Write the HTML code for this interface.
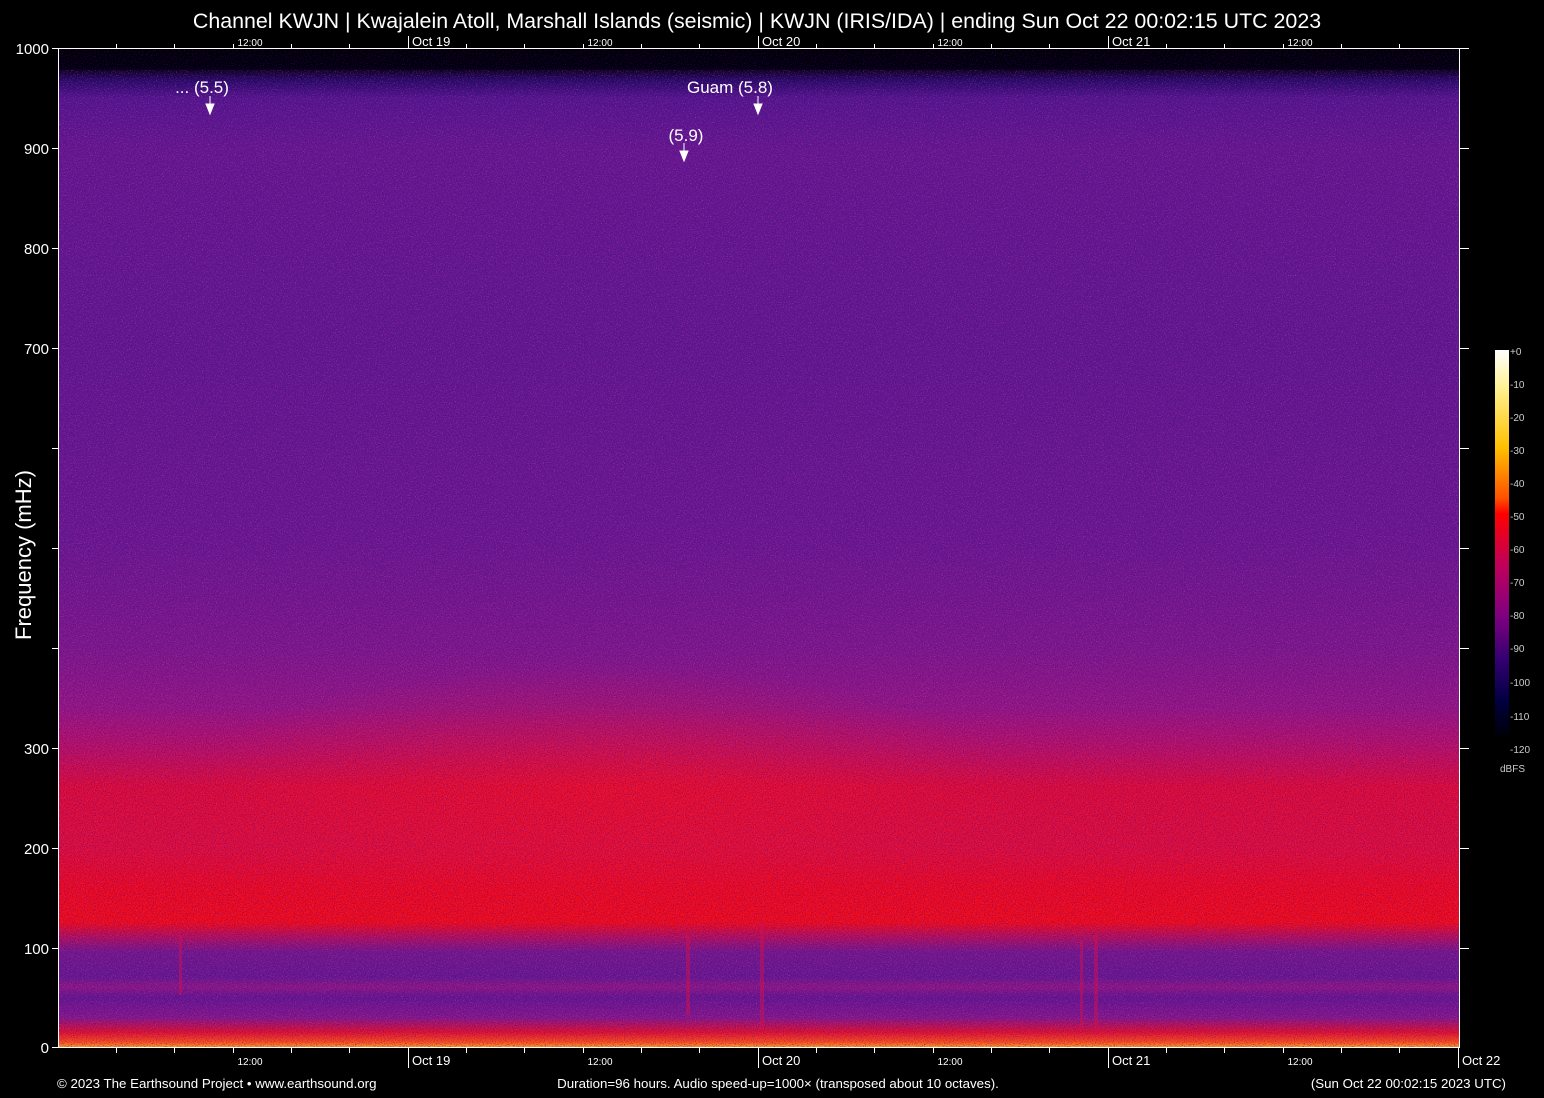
<!DOCTYPE html>
<html><head><meta charset="utf-8"><style>
html,body{margin:0;padding:0;background:#000;}
svg{display:block;font-family:"Liberation Sans",Arial,sans-serif;}
</style></head><body>
<svg width="1544" height="1098" viewBox="0 0 1544 1098" xmlns="http://www.w3.org/2000/svg">
<defs>
<linearGradient id="v" x1="0" y1="48" x2="0" y2="1047" gradientUnits="userSpaceOnUse">
<stop offset="0" stop-color="#000"/>
<stop offset="0.02" stop-color="#000008"/>
<stop offset="0.032" stop-color="#200a60"/>
<stop offset="0.05" stop-color="#50168a"/>
<stop offset="0.1" stop-color="#62188c"/>
<stop offset="0.3" stop-color="#5e188c"/>
<stop offset="0.5" stop-color="#68188c"/>
<stop offset="0.6" stop-color="#7a1888"/>
<stop offset="0.66" stop-color="#921680"/>
<stop offset="0.7" stop-color="#b81060"/>
<stop offset="0.74" stop-color="#e00a30"/>
<stop offset="0.8" stop-color="#e00c34"/>
<stop offset="0.84" stop-color="#f00818"/>
<stop offset="0.875" stop-color="#f40a10"/>
<stop offset="0.89" stop-color="#b01058"/>
<stop offset="0.905" stop-color="#701888"/>
<stop offset="0.93" stop-color="#64188c"/>
<stop offset="0.94" stop-color="#8a1880"/>
<stop offset="0.95" stop-color="#62168c"/>
<stop offset="0.97" stop-color="#801888"/>
<stop offset="0.985" stop-color="#e01028"/>
<stop offset="0.995" stop-color="#ff5010"/>
<stop offset="1" stop-color="#ffa020"/>
</linearGradient>
<radialGradient id="r" cx="600" cy="790" r="420" gradientUnits="userSpaceOnUse" gradientTransform="translate(600 790) scale(1 0.3) translate(-600 -790)">
<stop offset="0" stop-color="#ff1010" stop-opacity="0.45"/>
<stop offset="1" stop-color="#ff1010" stop-opacity="0"/>
</radialGradient>
<linearGradient id="cb" x1="0" y1="350" x2="0" y2="740" gradientUnits="userSpaceOnUse">
<stop offset="0" stop-color="#ffffff"/>
<stop offset="0.1" stop-color="#fff090"/>
<stop offset="0.25" stop-color="#ffc000"/>
<stop offset="0.38" stop-color="#ff5000"/>
<stop offset="0.42" stop-color="#ff0000"/>
<stop offset="0.55" stop-color="#c0005a"/>
<stop offset="0.68" stop-color="#800080"/>
<stop offset="0.8" stop-color="#300070"/>
<stop offset="0.9" stop-color="#000040"/>
<stop offset="1" stop-color="#000000"/>
</linearGradient>
<filter id="n" x="0" y="0" width="100%" height="100%">
<feTurbulence type="fractalNoise" baseFrequency="0.9" numOctaves="1" seed="3"/>
<feColorMatrix type="matrix" values="0 0 0 0 0.05  0 0 0 0 0  0 0 0 0 0.3  1.6 0 0 0 -0.75"/>
</filter>
<filter id="m" x="0" y="0" width="100%" height="100%">
<feTurbulence type="fractalNoise" baseFrequency="0.85" numOctaves="1" seed="7"/>
<feColorMatrix type="matrix" values="0 0 0 0 0.75  0 0 0 0 0.05  0 0 0 0 0.45  1.6 0 0 0 -0.8"/>
</filter>
</defs>
<rect width="1544" height="1098" fill="#000"/>
<rect x="58" y="48" width="1401" height="999" fill="url(#v)"/>
<rect x="58" y="600" width="1401" height="360" fill="url(#r)"/>
<rect x="58" y="70" width="1401" height="977" filter="url(#m)"/>
<rect x="58" y="48" width="1401" height="999" filter="url(#n)"/>
<g fill="#d01050" opacity="0.5">
<rect x="179" y="935" width="3" height="60"/>
<rect x="686" y="935" width="4" height="80"/>
<rect x="760" y="920" width="4" height="110"/>
<rect x="1080" y="940" width="3" height="90"/>
<rect x="1094" y="935" width="4" height="100"/>
</g>
<g stroke="#fff" stroke-width="1" fill="none">
<path d="M58.5 48V1047.5H1459.5V48M58 48.5H1459"/>
<path d="M52 48.5h6M52 148.5h6M52 248.5h6M52 348.5h6M52 448.5h6M52 548.5h6M52 648.5h6M52 748.5h6M52 848.5h6M52 948.5h6M52 1047.5h6"/>
<path d="M1459 48.5h10M1459 148.5h10M1459 248.5h10M1459 348.5h10M1459 448.5h10M1459 548.5h10M1459 648.5h10M1459 748.5h10M1459 848.5h10M1459 948.5h10"/>
<path d="M116.5 44v4M174.5 44v4M233.5 44v4M291.5 44v4M349.5 44v4M408.5 36v12M466.5 44v4M524.5 44v4M583.5 44v4M641.5 44v4M699.5 44v4M758.5 36v12M816.5 44v4M874.5 44v4M933.5 44v4M991.5 44v4M1049.5 44v4M1108.5 36v12M1166.5 44v4M1224.5 44v4M1283.5 44v4M1341.5 44v4M1399.5 44v4"/>
<path d="M116.5 1047v6M174.5 1047v6M233.5 1047v6M291.5 1047v6M349.5 1047v6M408.5 1047v21M466.5 1047v6M524.5 1047v6M583.5 1047v6M641.5 1047v6M699.5 1047v6M758.5 1047v21M816.5 1047v6M874.5 1047v6M933.5 1047v6M991.5 1047v6M1049.5 1047v6M1108.5 1047v21M1166.5 1047v6M1224.5 1047v6M1283.5 1047v6M1341.5 1047v6M1399.5 1047v6M1458.5 1047v21"/>
</g>
<g fill="#fff">
<text x="757" y="28" font-size="21.4" text-anchor="middle">Channel KWJN | Kwajalein Atoll, Marshall Islands (seismic) | KWJN (IRIS/IDA) | ending Sun Oct 22 00:02:15 UTC 2023</text>
<g font-size="10" text-anchor="middle"><text x="250" y="46">12:00</text><text x="600" y="46">12:00</text><text x="950" y="46">12:00</text><text x="1300" y="46">12:00</text>
<text x="250" y="1065">12:00</text><text x="600" y="1065">12:00</text><text x="950" y="1065">12:00</text><text x="1300" y="1065">12:00</text></g>
<g font-size="13"><text x="412" y="46">Oct 19</text><text x="762" y="46">Oct 20</text><text x="1112" y="46">Oct 21</text>
<text x="412" y="1065">Oct 19</text><text x="762" y="1065">Oct 20</text><text x="1112" y="1065">Oct 21</text><text x="1462" y="1065">Oct 22</text></g>
<g font-size="15" text-anchor="end"><text x="49" y="54">1000</text><text x="49" y="154">900</text><text x="49" y="254">800</text><text x="49" y="354">700</text><text x="49" y="754">300</text><text x="49" y="854">200</text><text x="49" y="954">100</text><text x="49" y="1053">0</text></g>
<text transform="translate(31 555) rotate(-90)" font-size="22" text-anchor="middle">Frequency (mHz)</text>
<g font-size="17" text-anchor="middle"><text x="202" y="93">... (5.5)</text><text x="730" y="93">Guam (5.8)</text><text x="686" y="141">(5.9)</text></g>
<path d="M210 96v8h-4l4 10 4-10h-4z M758 96v8h-4l4 10 4-10h-4z M684 143v8h-4l4 10 4-10h-4z" stroke="#fff" stroke-width="1"/>
<g font-size="13.3"><text x="57" y="1088">© 2023 The Earthsound Project • www.earthsound.org</text>
<text x="778" y="1088" text-anchor="middle">Duration=96 hours. Audio speed-up=1000× (transposed about 10 octaves).</text>
<text x="1506" y="1088" text-anchor="end">(Sun Oct 22 00:02:15 2023 UTC)</text></g>
<g font-size="10" fill="#ccc"><text x="1510" y="355">+0</text><text x="1510" y="388">-10</text><text x="1510" y="421">-20</text><text x="1510" y="454">-30</text><text x="1510" y="487">-40</text><text x="1510" y="520">-50</text><text x="1510" y="553">-60</text><text x="1510" y="586">-70</text><text x="1510" y="619">-80</text><text x="1510" y="652">-90</text><text x="1510" y="686">-100</text><text x="1510" y="720">-110</text><text x="1510" y="753">-120</text><text x="1500" y="772">dBFS</text></g>
</g>
<rect x="1495" y="350" width="14" height="392" fill="url(#cb)"/>
</svg>
</body></html>
